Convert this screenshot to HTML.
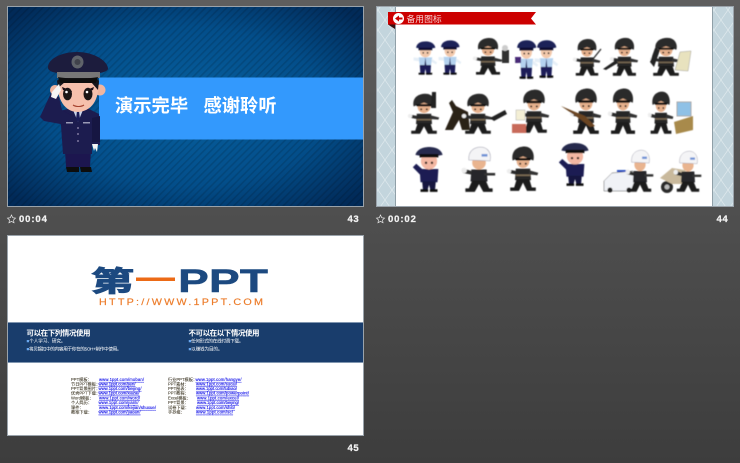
<!DOCTYPE html>
<html><head><meta charset="utf-8"><style>
html,body{margin:0;padding:0;width:740px;height:463px;overflow:hidden;background:#4b4b4b}
svg{display:block}
text{font-family:"Liberation Sans","Noto Sans CJK SC",sans-serif}
</style></head><body>
<svg width="740" height="463" viewBox="0 0 740 463" xmlns="http://www.w3.org/2000/svg">
<defs>
<linearGradient id="pg" x1="0" y1="0" x2="0" y2="1"><stop offset="0" stop-color="#5e5e5e"/><stop offset="1" stop-color="#3d3d3d"/></linearGradient>
<radialGradient id="bl" cx=".5" cy=".5" r=".66"><stop offset="0" stop-color="#07609f"/><stop offset=".6" stop-color="#034e8a"/><stop offset="1" stop-color="#012a58"/></radialGradient>
<pattern id="st" width="5" height="5" patternUnits="userSpaceOnUse" patternTransform="rotate(-45)"><rect width="5" height="1.600" fill="#000" opacity=".13"/></pattern>
<pattern id="dm" width="14" height="20" patternUnits="userSpaceOnUse"><rect width="14" height="20" fill="#c3d5dd"/><path d="M0 10L7 0L14 10L7 20Z" fill="none" stroke="#dfe9ed" stroke-width=".7"/></pattern>
<filter id="b1"><feGaussianBlur stdDeviation=".3"/></filter>
<filter id="b2"><feGaussianBlur stdDeviation=".35"/></filter>
<filter id="b3"><feGaussianBlur stdDeviation=".4"/></filter>

<g id="k">
 <path d="M11 24H29L30 38H10Z" fill="#262626"/>
 <path d="M12 37L9 47H4V51H15L20 41L25 51H36V47H31L28 37Z" fill="#1b1b1b"/>
 <circle cx="20" cy="15" r="8" fill="#e6b08c"/>
 <path d="M7 14C5 2 13 -3 22 -3C31 -3 35 6 33 14L20 9Z" fill="#2b2b2b"/>
 <path d="M10 11L30 11L29 14L11 14Z" fill="#0e0e0e"/>
 <circle cx="16.500" cy="18" r="1.200" fill="#000"/><circle cx="23.500" cy="18" r="1.200" fill="#000"/>
 <path d="M2 25L12 27L11 31L1 29Z" fill="#2b2b2b"/><circle cx="2.500" cy="27" r="2.800" fill="#eee"/>
 <path d="M28 26L39 29L38 32L27 31Z" fill="#333"/>
 <path d="M11 31H29V33H11Z" fill="#7b6a52"/>
</g>
<g id="u">
 <path d="M9 24H31L29 37H11Z" fill="#b4d2ef"/>
 <path d="M11 36H29L28 51H22L20 42L18 51H12Z" fill="#1a1f58"/>
 <path d="M9 51H19V48H9ZM21 51H31V48H21Z" fill="#111"/>
 <circle cx="20" cy="15" r="9" fill="#f3c9ac"/>
 <path d="M5 9C6 1 14 -1 21 -1C29 -1 35 3 36 9L20 12Z" fill="#1d2258"/>
 <path d="M9 9H31V13H9Z" fill="#0d1030"/>
 <circle cx="16.500" cy="17" r="1.300" fill="#000"/><circle cx="23.500" cy="17" r="1.300" fill="#000"/>
 <path d="M20 24L21.500 36H18.500Z" fill="#1a1f58"/>
 <path d="M1 24L10 25L10 30L1 29Z" fill="#e6eff7"/><path d="M30 26L39 32L37 35L30 31Z" fill="#e6eff7"/>
</g>
<g id="d">
 <path d="M9 25H31L30 40H10Z" fill="#1b1f52"/>
 <path d="M12 39H28L27 50H22L20 43L18 50H13Z" fill="#15193f"/>
 <path d="M10 51H19V48H10ZM21 51H30V48H21Z" fill="#0c0c0c"/>
 <path d="M1 23L5 19L13 26L11 33Z" fill="#1b1f52"/>
 <circle cx="20" cy="16" r="9.500" fill="#f3b7a3"/>
 <path d="M4 9C6 2 14 0 20 0C27 0 34 2 36 9L20 12Z" fill="#252a4e"/>
 <path d="M9 8H31V12H9Z" fill="#111"/>
 <circle cx="16.500" cy="18" r="1.400" fill="#000"/><circle cx="23.500" cy="18" r="1.400" fill="#000"/>
</g>
<g id="w">
 <path d="M11 25H29L30 39H10Z" fill="#25262c"/>
 <path d="M12 38L8 47H4V51H15L20 42L25 51H36V47H32L28 38Z" fill="#1d1d1d"/>
 <circle cx="20" cy="17" r="8" fill="#e9b48f"/>
 <path d="M8 14C7 3 15 -1 22 -1C31 -1 35 7 33 15Z" fill="#f4f4f6" stroke="#99a" stroke-width=".6"/>
 <rect x="23" y="7" width="7" height="3" fill="#6f93d6"/>
 <path d="M2 24L12 27L11 31L1 29Z" fill="#2d2d2d"/><circle cx="2.500" cy="26" r="3.200" fill="#eee"/>
 <path d="M26 29H39V32H26Z" fill="#333"/>
</g>
</defs>

<rect width="740" height="463" fill="url(#pg)"/>

<!-- Slide 43 -->
<rect x="7.500" y="6.500" width="356" height="200" fill="url(#bl)" stroke="#9aa3ab" stroke-width="1"/>
<rect x="8" y="7" width="355" height="199" fill="url(#st)"/>
<rect x="99" y="77.500" width="264" height="62" fill="#3399fd"/>
<text x="115" y="112" font-size="18.300" font-weight="700" fill="#fff">演示完毕</text>
<text x="203.500" y="112" font-size="18.300" font-weight="700" fill="#fff">感谢聆听</text>

<!-- Main officer -->
<g filter="url(#b1)">
 <path d="M66 167L65 150H91L90 167Z" fill="#1d1650"/>
 <path d="M66 167H79V172H67ZM80 167H91L92 172H81Z" fill="#0a0a0a"/>
 <path d="M60 111L75 107H85L99 114L100 145H92V154H63Z" fill="#1e1a50"/>
 <path d="M62 110L73 116L66 125L44 121L40 117L51 93L59 97Z" fill="#1e1a50"/>
 <path d="M92 118L100 116L100 142H92Z" fill="#191543"/>
 <path d="M73 110H83L78 122Z" fill="#cbd5ea"/><path d="M77 111H79L80 119L78 122L76 119Z" fill="#1a1f58"/>
 <circle cx="78" cy="128" r=".9" fill="#9a94b6"/><circle cx="78" cy="134" r=".9" fill="#9a94b6"/><circle cx="78" cy="141" r=".9" fill="#9a94b6"/>
 <rect x="66" y="122" width="7" height="1.500" fill="#9a9ab5"/><rect x="83" y="122" width="7" height="1.500" fill="#9a9ab5"/>
 <path d="M92 144L98 144L97 152L95 148L94 151Z" fill="#f4f4f4"/>
 <circle cx="55" cy="90" r="5" fill="#f1b6a0"/><circle cx="100" cy="90" r="5.500" fill="#f1b6a0"/>
 <path d="M58 80H98C100 94 95 111 78 112C62 112 56 94 58 80Z" fill="#f6c0ac"/>
 <path d="M57 81C62 73 94 73 99 81L98 90L91 82H65L58 88Z" fill="#17141f"/>
 <path d="M62 87L72 91L71 93L63 90ZM94 87L84 91L85 93L93 90Z" fill="#1b1113"/>
 <ellipse cx="67.500" cy="94" rx="4.500" ry="6.300" fill="#1c1216"/><ellipse cx="88" cy="94" rx="4.500" ry="6.300" fill="#1c1216"/>
 <circle cx="66.500" cy="92" r="1.300" fill="#fff"/><circle cx="87" cy="92" r="1.300" fill="#fff"/>
 <path d="M73 105C76 107 81 107 84 105" stroke="#a5432e" fill="none" stroke-width="1.100"/>
 <path d="M59 84L52 92L51 97L56 99L61 90Z" fill="#f5f5f5"/>
 <path d="M48 68C47 60 60 52 77 52C94 52 108 61 108 69C106 73 97 74 78 74C60 74 49 73 48 68Z" fill="#1c1a3c"/>
 <path d="M57 72H100V78H57Z" fill="#777"/>
 <path d="M58 77C66 79 90 79 98 77L96 83H60Z" fill="#111"/>
 <ellipse cx="77.500" cy="62" rx="6" ry="6.500" fill="#5e636b"/><circle cx="77.500" cy="62" r="3" fill="#3f434b"/>
</g>

<!-- Slide 44 -->
<rect x="376.500" y="6.500" width="357" height="200" fill="#fff" stroke="#9aa3ab" stroke-width="1"/>
<rect x="377" y="7" width="18" height="199" fill="url(#dm)"/>
<rect x="713" y="7" width="20" height="199" fill="url(#dm)"/>
<rect x="395" y="7" width="1" height="199" fill="#90a0a8"/>
<rect x="712" y="7" width="1" height="199" fill="#90a0a8"/>
<path d="M388 12H536L531 18.500L536 24.500H388Z" fill="#cc0000"/>
<path d="M388 24.500H395V29Z" fill="#3a1010"/>
<circle cx="398.500" cy="18.500" r="5.500" fill="#fff"/>
<path d="M395 18.500L399 15.500V17.500H402.500V19.500H399V21.500Z" fill="#cc0000"/>
<text x="406.500" y="22" font-size="8.800" fill="#f6d0d0" filter="url(#b1)">备用图标</text>

<g filter="url(#b3)">
 <!-- Row 1 -->
 <use href="#u" transform="translate(413,42) scale(.62,.64)"/>
 <use href="#u" transform="translate(438,41) scale(.6,.66)"/>
 <use href="#k" transform="translate(473,40) scale(.75,.68)"/>
 <rect x="502" y="50" width="7" height="13" fill="#333"/><circle cx="505" cy="48" r="3" fill="#ccc"/>
 <use href="#u" transform="translate(514,41) scale(.62,.74)"/>
 <use href="#u" transform="translate(534,41) scale(.62,.72)"/>
 <rect x="515" y="57" width="6" height="6" fill="#4a2a78"/>
 <use href="#k" transform="translate(573,41) scale(.7,.68)"/>
 <path d="M593 59L601 49" stroke="#222" stroke-width="1.200"/>
 <use href="#k" transform="translate(610,40) scale(.72,.7)"/>
 <path d="M603 69L616 60L618 63L606 70Z" fill="#222"/>
 <use href="#k" transform="translate(650,40) scale(.8,.7)"/>
 <path d="M680 52L691 51L688 71L675 70Z" fill="#e8e2be" stroke="#888" stroke-width=".4"/>
 <path d="M650 62L655 48L660 50L654 67Z" fill="#222"/>
 <!-- Row 2 -->
 <use href="#k" transform="translate(408,96) scale(.8,.74)"/>
 <path d="M432 92H436V108H431Z" fill="#222"/>
 <path d="M445 130L453 112L449 103L452 100L456 106L468 112L470 130H462L459 120L453 130Z" fill="#2a2018"/>
 <use href="#k" transform="translate(462,96) scale(.8,.74)"/>
 <path d="M490 118L505 110L507 114L494 121Z" fill="#222"/>
 <use href="#k" transform="translate(518,92) scale(.8,.8)"/>
 <rect x="516" y="110" width="9" height="10" fill="#f4efd5" stroke="#999" stroke-width=".4"/>
 <rect x="512" y="124" width="14" height="9" fill="#c86a5a"/>
 <use href="#k" transform="translate(570,91) scale(.8,.84)"/>
 <path d="M561 106L585 116L595 126L590 127L580 119Z" fill="#6a4520"/>
 <use href="#k" transform="translate(608,91) scale(.75,.84)"/>
 <use href="#k" transform="translate(648,94) scale(.65,.78)"/>
 <rect x="677" y="102" width="14" height="14" fill="#8fc1e6" stroke="#aaa" stroke-width="1"/>
 <path d="M674 122L693 116V130L676 134Z" fill="#a88a4c"/>
 <!-- Row 3 -->
 <use href="#d" transform="translate(412,147) scale(.85,.88)"/>
 <use href="#w" transform="translate(462,148) scale(.85,.86)"/>
 <use href="#k" transform="translate(507,149) scale(.8,.82)"/>
 <use href="#d" transform="translate(558,143) scale(.85,.84)"/>
 <path d="M604 181L612 173L633 171L636 191H604Z" fill="#f0f2f6" stroke="#444" stroke-width=".5"/>
 <rect x="617" y="170" width="10" height="2" fill="#2b4fc0"/>
 <circle cx="610" cy="190" r="2.500" fill="#222"/><circle cx="629" cy="190" r="2.500" fill="#222"/>
 <use href="#w" transform="translate(626,151) scale(.7,.8)"/>
 <circle cx="667" cy="187" r="6" fill="#2c2c2c"/><circle cx="667" cy="187" r="2.500" fill="#bbb"/>
 <path d="M660 178L672 168L685 170L690 184L672 184Z" fill="#c9b99c"/>
 <use href="#w" transform="translate(674,152) scale(.7,.78)"/>
</g>

<!-- Slide 45 -->
<rect x="7.500" y="235.500" width="356" height="200" fill="#fff" stroke="#9aa3ab" stroke-width="1"/>
<g filter="url(#b1)">
<text x="91" y="291" font-size="28" font-weight="700" fill="#1c4a80" stroke="#1c4a80" stroke-width="1.100" textLength="43" lengthAdjust="spacingAndGlyphs">第</text>
<rect x="136" y="277.500" width="39" height="3.500" fill="#ec6a14"/>
<text x="178" y="292" font-size="32" font-weight="700" fill="#1c4a80" stroke="#1c4a80" stroke-width=".4" textLength="90" lengthAdjust="spacingAndGlyphs">PPT</text>
<text transform="translate(99,305) scale(1.2,1)" font-size="9" fill="#ec7c2a" stroke="#ec7c2a" stroke-width=".15" textLength="136.700" lengthAdjust="spacing">HTTP://WWW.1PPT.COM</text>
</g>
<rect x="8" y="322" width="355" height="40.500" fill="#193d6c"/>
<rect x="8" y="322" width="355" height="1" fill="#8096b0"/>
<rect x="8" y="362" width="355" height="1" fill="#8096b0"/>
<g fill="#fff" filter="url(#b1)">
 <text x="26.500" y="335.500" font-size="7.500" font-weight="700" textLength="64">可以在下列情况使用</text>
 <text x="188.500" y="335.500" font-size="7.500" font-weight="700" textLength="71">不可以在以下情况使用</text>
 <g font-size="4.600">
  <text x="26.500" y="342.500" textLength="39"><tspan fill="#6aa8f0">■</tspan>个人学习、研究。</text>
  <text x="26.500" y="350.500" textLength="95"><tspan fill="#6aa8f0">■</tspan>将贝锦扣中的内容用于你在的5OH+制作中使用。</text>
  <text x="188.500" y="342.500" textLength="55"><tspan fill="#6aa8f0">■</tspan>任何形式的在线付费下载。</text>
  <text x="188.500" y="350.500" textLength="34"><tspan fill="#6aa8f0">■</tspan>以赚钱为目的。</text>
 </g>
</g>
<g font-size="4.200" fill="#4a4434" stroke="#4a4434" stroke-width=".1" filter="url(#b2)">
 <text x="71" y="381">PPT模板：</text><text x="71" y="385.500">节日PPT模板：</text><text x="71" y="390">PPT背景图片：</text><text x="71" y="394.700">优秀PPT下载：</text>
 <text x="71" y="399.500">Word模板：</text><text x="71" y="404">个人简历：</text><text x="71" y="409">课件：</text><text x="71" y="413.700">教案下载：</text>
 <text x="168" y="381">行业PPT模板：</text><text x="168" y="385.500">PPT素材：</text><text x="168" y="390">PPT图表：</text><text x="168" y="394.700">PPT教程：</text>
 <text x="168" y="399.500">Excel模板：</text><text x="168" y="404">PPT背景：</text><text x="168" y="409">试卷下载：</text><text x="168" y="413.700">手抄报：</text>
</g>
<g font-size="4.200" fill="#1010e8" stroke="#1010e8" stroke-width=".12" text-decoration="underline" filter="url(#b2)">
 <text x="99" y="381" textLength="45">www.1ppt.com/moban/</text>
 <text x="98.500" y="385.500" textLength="37">www.1ppt.com/jieri/</text>
 <text x="98.500" y="390" textLength="43">www.1ppt.com/beijing/</text>
 <text x="98.500" y="394.700" textLength="41">www.1ppt.com/xiazai/</text>
 <text x="99" y="399.500" textLength="41">www.1ppt.com/word/</text>
 <text x="98.500" y="404" textLength="40">www.1ppt.com/jianli/</text>
 <text x="99" y="409" textLength="57">www.1ppt.com/kejian/shuxue/</text>
 <text x="98.500" y="413.700" textLength="42">www.1ppt.com/jiaoan/</text>
 <text x="195.500" y="381" textLength="46">www.1ppt.com/hangye/</text>
 <text x="196" y="385.500" textLength="41">www.1ppt.com/sucai/</text>
 <text x="196" y="390" textLength="41">www.1ppt.com/tubiao/</text>
 <text x="196" y="394.700" textLength="53">www.1ppt.com/powerpoint/</text>
 <text x="197" y="399.500" textLength="42">www.1ppt.com/excel/</text>
 <text x="197" y="404" textLength="42">www.1ppt.com/beijing/</text>
 <text x="196" y="409" textLength="39">www.1ppt.com/shiti/</text>
 <text x="196" y="413.700" textLength="37">www.1ppt.com/sc/</text>
</g>

<!-- Captions -->
<g fill="#f2f2f2" stroke="#f2f2f2" stroke-width=".25" font-weight="700" font-size="9.500">
 <path d="M11.500 215L12.700 217.700L15.500 218.100L13.500 220L14 222.700L11.500 221.400L9 222.700L9.500 220L7.500 218.100L10.300 217.700Z" fill="none" stroke="#e8e8e8" stroke-width=".7"/>
 <text x="19" y="222" letter-spacing=".9">00:04</text>
 <text x="347.500" y="222" letter-spacing=".6">43</text>
 <path d="M380.500 215L381.700 217.700L384.500 218.100L382.500 220L383 222.700L380.500 221.400L378 222.700L378.500 220L376.500 218.100L379.300 217.700Z" fill="none" stroke="#e8e8e8" stroke-width=".7"/>
 <text x="388" y="222" letter-spacing=".9">00:02</text>
 <text x="716.500" y="222" letter-spacing=".6">44</text>
 <text x="347.500" y="451" letter-spacing=".6">45</text>
</g>
</svg>
</body></html>
